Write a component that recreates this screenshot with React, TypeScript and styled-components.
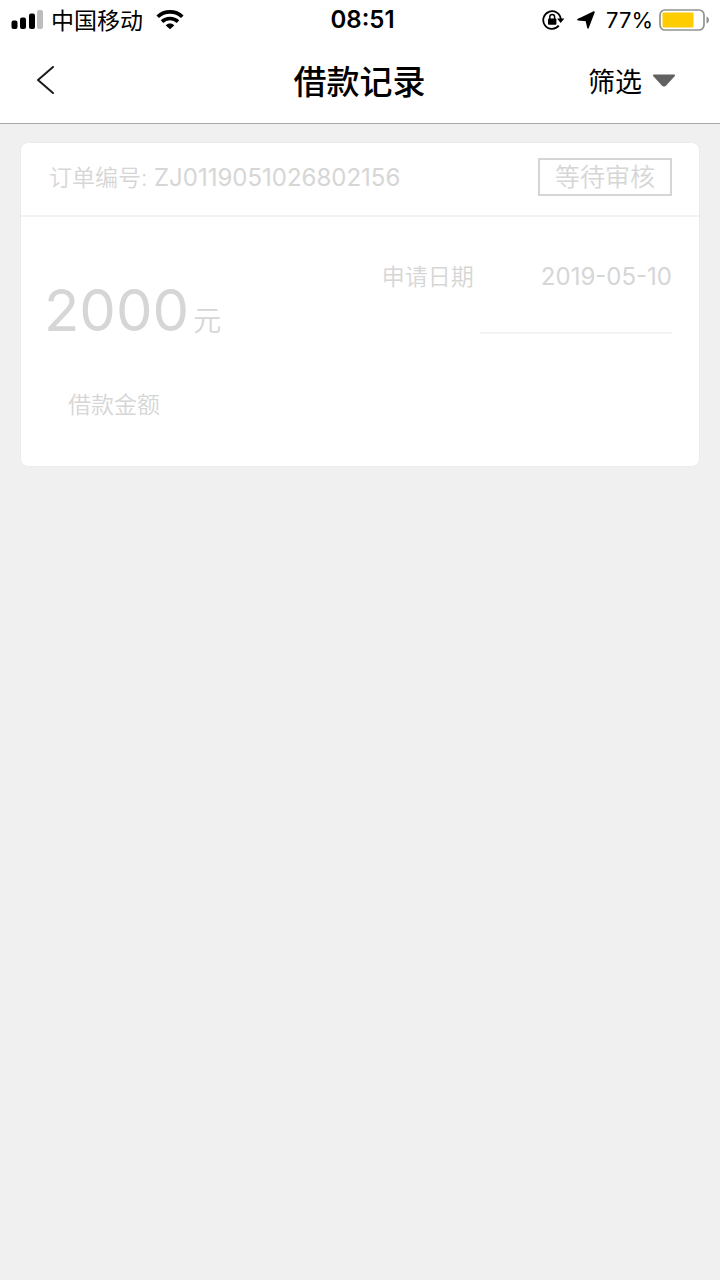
import React from "react";
import styled, { createGlobalStyle } from "styled-components";

const GlobalStyle = createGlobalStyle`
  * { box-sizing: border-box; }
  body {
    margin: 0;
    background: #f0f0f0;
    color: #000;
    font-family: Inter, "Noto Sans CJK SC", sans-serif;
  }
  button { font: inherit; color: inherit; }
`;

const Top = styled.header`
  background: #fff;
  border-bottom: 1px solid #a9a9a9;
`;

const StatusBar = styled.div`
  display: grid;
  grid-template-columns: 1fr auto 1fr;
  align-items: center;
  height: 40px;
  padding: 0 10px 0 11px;
  font-size: 23px;
  line-height: 28px;
`;

const StatusGroup = styled.div<{ $end?: boolean }>`
  display: flex;
  align-items: center;
  justify-content: ${(p) => (p.$end ? "flex-end" : "flex-start")};
`;

const Carrier = styled.span`
  padding-top: 2px;
  margin: 0 13px 0 8px;
`;

const Clock = styled.time`
  margin-left: 4px;
  font-size: 24px;
  font-weight: 600;
`;

const Percent = styled.span`
  margin: 0 6px 0 11px;
  font-size: 22px;
`;

const LocationIcon = styled.svg`
  margin-left: 12px;
`;

const NavBar = styled.nav`
  display: grid;
  grid-template-columns: 1fr auto 1fr;
  align-items: center;
  height: 83px;
  padding: 0 44px 4px 24px;
`;

const BackButton = styled.button`
  display: flex;
  justify-self: start;
  padding: 8px 12px;
  border: 0;
  background: none;
`;

const Title = styled.h1`
  margin: 0 0 0 19px;
  padding-top: 4px;
  font-size: 33px;
  font-weight: 500;
  line-height: 40px;
`;

const FilterButton = styled.button`
  display: flex;
  align-items: center;
  justify-self: end;
  gap: 10px;
  padding: 2px 0 0;
  border: 0;
  background: none;
  font-size: 27px;
  line-height: 40px;
`;

const FilterText = styled.span`
  padding-top: 4px;
`;

const Records = styled.main`
  padding: 18px 20px;
`;

const Card = styled.article`
  background: #fff;
  border: 1px solid #ebebeb;
  border-radius: 8px;
  color: #d6d6d6;
  font-size: 23px;
  line-height: 32px;
`;

const CardHead = styled.div`
  display: flex;
  align-items: center;
  justify-content: space-between;
  height: 74px;
  padding: 0 27px 5px 28px;
  border-bottom: 2px solid #f3f3f3;
`;

const OrderNumber = styled.span`
  padding-top: 3px;
  font-weight: 350;
`;

const Digits = styled.span`
  font-size: 24px;
  font-weight: 400;
`;

const StatusTag = styled.span`
  padding: 0 15px;
  border: 2px solid #d6d6d6;
  font-size: 25px;
  font-weight: 350;
  line-height: 34px;
`;

const CardBody = styled.div`
  display: flex;
  justify-content: space-between;
  height: 249px;
  padding: 44px 27px 0 23px;
`;

const Loan = styled.div`
  padding-top: 13px;
`;

const Amount = styled.div`
  display: flex;
  align-items: baseline;
  gap: 4px;
  font-size: 58px;
  line-height: 72px;
`;

const Unit = styled.span`
  font-size: 28px;
  font-weight: 350;
`;

const AmountLabel = styled.div`
  margin: 32px 0 0 24px;
  font-weight: 350;
`;

const Details = styled.dl`
  display: flex;
  flex-direction: column;
  align-items: flex-end;
  gap: 39px;
  margin: 0;
`;

const DetailRow = styled.div`
  display: flex;
  justify-content: space-between;
  gap: 67px;
`;

const DetailName = styled.dt`
  font-weight: 350;
`;

const DetailValue = styled.dd`
  margin: 0;
  font-size: 24px;
`;

const Divider = styled.div`
  width: 192px;
  height: 2px;
  background: #f3f3f3;
`;

const SignalIcon = () => (
  <svg width="32" height="20" viewBox="0 0 32 20" aria-hidden="true">
    <rect x="0.5" y="10.5" width="6" height="8.5" rx="2" />
    <rect x="9" y="7.5" width="6" height="11.5" rx="2" />
    <rect x="18" y="3.5" width="6" height="15.5" rx="2" />
    <rect x="26" y="0" width="6" height="19" rx="2" fill="#bdbdbd" />
  </svg>
);

const WifiIcon = () => (
  <svg width="28" height="20" viewBox="0 0 28 20" fill="none" stroke="#000" strokeWidth="3.6" aria-hidden="true">
    <path d="M1.7 6.8C8.5 0.2 19.5 0.2 26.3 6.8" />
    <path d="M6 11.6C10.4 7.4 17.6 7.4 22 11.6" />
    <path d="M9.8 15.4C12 13 16 13 18.2 15.4L14 19.2Z" fill="#000" stroke="none" />
  </svg>
);

const RotationLockIcon = () => (
  <svg width="23" height="20" viewBox="0 0 23 20" fill="none" stroke="#000" strokeWidth="1.8" aria-hidden="true">
    <path d="M16.8 15.7A8.8 8.8 0 1 1 18.8 9" />
    <path d="M15 8.6H22.4L18.7 13Z" fill="#000" stroke="none" />
    <rect x="6" y="8.4" width="8.4" height="6.4" rx="1" fill="#000" stroke="none" />
    <path d="M7.8 9V6.8A2.4 2.4 0 0 1 12.6 6.8V9" strokeWidth="1.5" />
  </svg>
);

const BatteryIcon = () => (
  <svg width="51" height="22" viewBox="0 0 51 22" aria-hidden="true">
    <rect x="1" y="1" width="44" height="20" rx="5" fill="none" stroke="#929292" strokeWidth="1.7" />
    <rect x="3.5" y="3.5" width="31" height="15" rx="1" fill="#fc0" />
    <path d="M47.5 7.5C50.8 8.5 50.8 13.5 47.5 14.5Z" fill="#929292" />
  </svg>
);

export default function App() {
  return (
    <>
      <GlobalStyle />
      <Top>
        <StatusBar>
          <StatusGroup>
            <SignalIcon />
            <Carrier>中国移动</Carrier>
            <WifiIcon />
          </StatusGroup>
          <Clock>08:51</Clock>
          <StatusGroup $end>
            <RotationLockIcon />
            <LocationIcon width="18" height="18" viewBox="0 0 18 18" aria-hidden="true">
              <path d="M17 1L11 16.8L9.3 9.4L1 8.6Z" stroke="#000" strokeWidth="1.6" strokeLinejoin="round" />
            </LocationIcon>
            <Percent>77%</Percent>
            <BatteryIcon />
          </StatusGroup>
        </StatusBar>
        <NavBar>
          <BackButton type="button" aria-label="返回">
            <svg width="18" height="28" viewBox="0 0 18 28" fill="none" stroke="#1a1a1a" strokeWidth="2" aria-hidden="true">
              <path d="M17 1L2 14L17 27" strokeLinecap="round" strokeLinejoin="round" />
            </svg>
          </BackButton>
          <Title>借款记录</Title>
          <FilterButton type="button">
            <FilterText>筛选</FilterText>
            <svg width="24" height="14" viewBox="0 0 24 14" fill="#616161" aria-hidden="true">
              <path d="M2 0.5H22Q24 0.8 22.4 2.6L14.4 11.3Q12 13.8 9.6 11.3L1.6 2.6Q0 0.8 2 0.5Z" />
            </svg>
          </FilterButton>
        </NavBar>
      </Top>
      <Records>
        <Card>
          <CardHead>
            <OrderNumber>
              订单编号: <Digits>ZJ0119051026802156</Digits>
            </OrderNumber>
            <StatusTag>等待审核</StatusTag>
          </CardHead>
          <CardBody>
            <Loan>
              <Amount>
                2000<Unit>元</Unit>
              </Amount>
              <AmountLabel>借款金额</AmountLabel>
            </Loan>
            <Details>
              <DetailRow>
                <DetailName>申请日期</DetailName>
                <DetailValue>2019-05-10</DetailValue>
              </DetailRow>
              <Divider />
            </Details>
          </CardBody>
        </Card>
      </Records>
    </>
  );
}
